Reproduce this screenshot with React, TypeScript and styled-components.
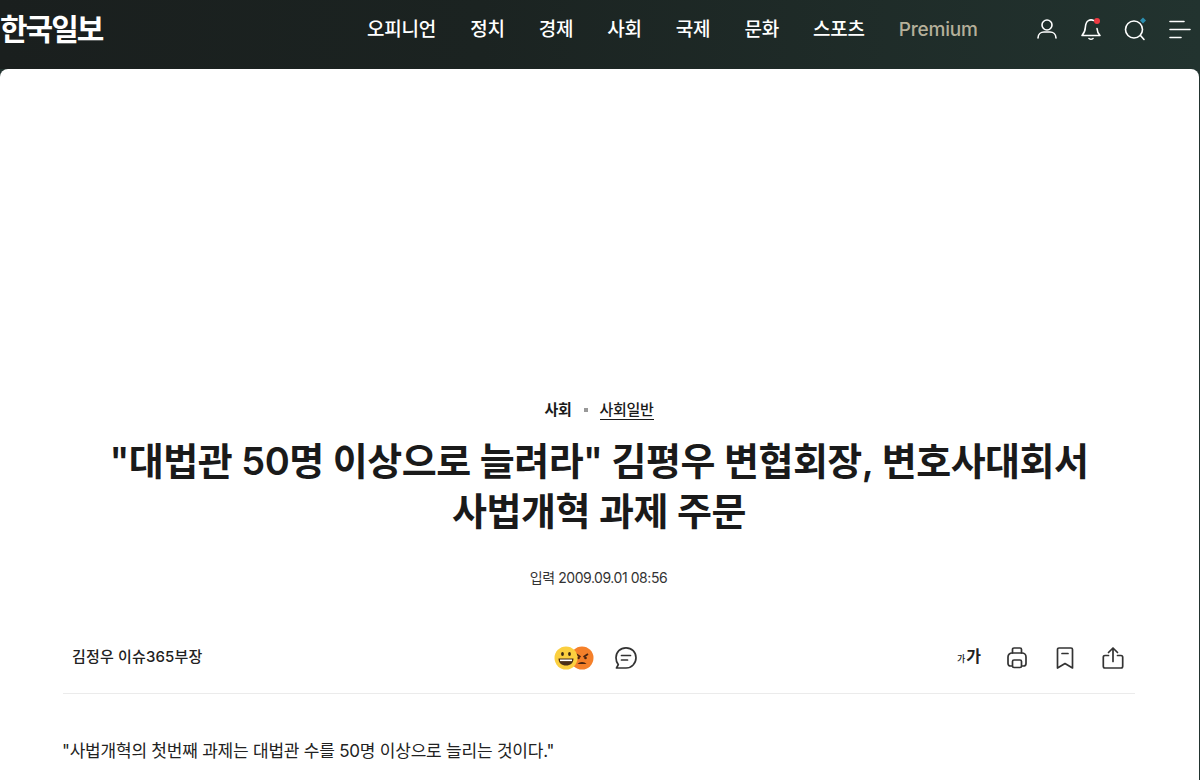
import React from 'react'
import styled, { createGlobalStyle } from 'styled-components'

const GlobalStyle = createGlobalStyle`
  html, body {
    margin: 0;
    height: 780px;
    overflow: hidden;
    background: #fff;
    font-family: Inter, 'Noto Sans CJK KR', sans-serif;
    color: #1a1a1a;
  }
`

const Header = styled.header`
  height: 69px;
  background: linear-gradient(90deg, #1a1f1e 0%, #1b2321 40%, #22332f 100%);
  display: flex;
  align-items: center;
  color: #fff;
`

const Logo = styled.div`
  font-size: 30px;
  font-weight: 700;
  letter-spacing: -2px;
  line-height: 36px;
  width: 367px;
  margin: -11px 0 0 0;
  flex: none;
`

const Nav = styled.nav`
  display: flex;
  gap: 34px;
  margin-top: -9px;
`

const NavItem = styled.a<{ $premium?: boolean }>`
  font-size: 19px;
  font-weight: 500;
  line-height: 24px;
  letter-spacing: -0.2px;
  color: ${(p) => (p.$premium ? '#b5b09a' : '#fff')};
`

const HeaderIcons = styled.div`
  margin-left: auto;
  margin-right: 9px;
  margin-top: -11px;
  display: flex;
  gap: 20px;
`

const IconBox = styled.span`
  width: 24px;
  height: 24px;
  display: block;
  svg {
    display: block;
  }
`

const Card = styled.main`
  height: 711px;
  margin-right: 1px;
  background: #fff;
  border-radius: 8px 8px 0 0;
  overflow: hidden;
`

const HeaderOverlap = styled.div`
  background: #22332f;
`

const Article = styled.article`
  padding: 329px 64px 0 63px;
`

const Crumbs = styled.div`
  display: flex;
  justify-content: center;
  align-items: center;
  gap: 12px;
  font-size: 15px;
  font-weight: 500;
  line-height: 24px;
  letter-spacing: -0.3px;
`

const TopCrumb = styled.span`
  font-weight: 600;
`

const Square = styled.i`
  width: 4px;
  height: 4px;
  background: #999;
`

const SubCrumb = styled.a`
  border-bottom: 1px solid #1a1a1a;
  line-height: 19px;
`

const Title = styled.h1`
  margin: 14px 0 0;
  font-size: 38px;
  font-weight: 600;
  line-height: 50px;
  letter-spacing: -0.5px;
  text-align: center;
  color: #1a1a1a;
`

const DateLine = styled.div`
  margin: 32px 1px 0 0;
  text-align: center;
  font-size: 14px;
  line-height: 20px;
  letter-spacing: -0.45px;
  color: #333;
`

const Toolbar = styled.div`
  margin-top: 34px;
  height: 71px;
  padding: 0 10px 0 9px;
  display: grid;
  grid-template-columns: 1fr auto 1fr;
  align-items: center;
  border-bottom: 1px solid #ebebeb;
`

const Byline = styled.div`
  font-size: 15px;
  font-weight: 500;
  line-height: 20px;
  margin-top: -2px;
  letter-spacing: 0.15px;
  color: #222;
`

const Reactions = styled.div`
  display: flex;
  align-items: center;
  gap: 20px;
  margin-right: 5px;
`

const Faces = styled.div`
  display: flex;
  svg:first-child {
    position: relative;
    z-index: 1;
  }
  svg + svg {
    margin-left: -8px;
  }
`

const Tools = styled.div`
  display: flex;
  justify-content: flex-end;
  gap: 24px;
`

const FontSizeIcon = styled.span`
  width: 24px;
  height: 24px;
  display: flex;
  align-items: baseline;
  justify-content: center;
  font-size: 16px;
  font-weight: 700;
  line-height: 20px;
  color: #222;
  small {
    font-size: 9px;
    font-weight: 500;
    margin-right: 1px;
  }
`

const Lead = styled.p`
  margin: 44px 0 0 -1px;
  font-size: 17px;
  line-height: 26px;
  letter-spacing: -0.22px;
  color: #222;
`

const stroke = { fill: 'none', stroke: '#fff', strokeWidth: 1.6, strokeLinecap: 'round' as const, strokeLinejoin: 'round' as const }
const dark = { fill: 'none', stroke: '#333', strokeWidth: 1.7, strokeLinecap: 'round' as const, strokeLinejoin: 'round' as const }

export default function App() {
  return (
    <>
      <GlobalStyle />
      <Header>
        <Logo>한국일보</Logo>
        <Nav>
          {['오피니언', '정치', '경제', '사회', '국제', '문화', '스포츠'].map((n) => (
            <NavItem key={n}>{n}</NavItem>
          ))}
          <NavItem $premium>Premium</NavItem>
        </Nav>
        <HeaderIcons>
          <IconBox>
            <svg width="24" height="24" viewBox="0 0 24 24">
              <circle cx="12" cy="8" r="5" {...stroke} />
              <path d="M3 21c0-4 3-6 6-6h6c3 0 6 2 6 6" {...stroke} />
            </svg>
          </IconBox>
          <IconBox>
            <svg width="24" height="24" viewBox="0 0 24 24">
              <path d="M15 3.6C13 2.6 11 2.6 9.4 3.6 7 5 6.6 7.4 6.4 10c-.2 3.6-1 6-3.4 8.5h18c-2-2-2.8-4-3-7" {...stroke} />
              <path d="M10 21.5c1 .8 3 .8 4 0" {...stroke} />
              <circle cx="18" cy="4" r="3" fill="#ee3a43" />
            </svg>
          </IconBox>
          <IconBox>
            <svg width="24" height="24" viewBox="0 0 24 24">
              <circle cx="11" cy="12.5" r="8.5" {...stroke} />
              <path d="M17.5 18.5l3.5 4" {...stroke} />
              <path d="M20 .5l3 3-3 3-3-3z" fill="#2c8fb0" />
            </svg>
          </IconBox>
          <IconBox>
            <svg width="24" height="24" viewBox="0 0 24 24">
              <path d="M3 4.5h14M3 12.5h20M3 20.5h11" {...stroke} />
            </svg>
          </IconBox>
        </HeaderIcons>
      </Header>
      <HeaderOverlap>
        <Card>
          <Article>
            <Crumbs>
              <TopCrumb>사회</TopCrumb>
              <Square />
              <SubCrumb>사회일반</SubCrumb>
            </Crumbs>
            <Title>
              "대법관 50명 이상으로 늘려라" 김평우 변협회장, 변호사대회서
              <br />
              사법개혁 과제 주문
            </Title>
            <DateLine>입력 2009.09.01 08:56</DateLine>
            <Toolbar>
              <Byline>김정우 이슈365부장</Byline>
              <Reactions>
                <Faces>
                  <svg width="24" height="24" viewBox="0 0 24 24">
                    <circle cx="12" cy="12" r="11.5" fill="#fbcf3f" />
                    <ellipse cx="8.5" cy="8" rx="1.4" ry="2" fill="#3c2a14" />
                    <ellipse cx="15.5" cy="8" rx="1.4" ry="2" fill="#3c2a14" />
                    <path d="M4.500 12.500h15c0 4.500-3.200 7-7.500 7s-7.500-2.500-7.500-7z" fill="#4a2f18" />
                    <path d="M6 13.500h12v1.600H6z" fill="#fff" />
                  </svg>
                  <svg width="24" height="24" viewBox="0 0 24 24">
                    <circle cx="12" cy="12" r="11.500" fill="#f5802a" />
                    <path d="M6 8l4.500 3M18 8l-4.500 3" stroke="#4a2410" strokeWidth="1.800" fill="none" />
                    <circle cx="8.500" cy="12" r="1.300" fill="#4a2410" />
                    <circle cx="15.500" cy="12" r="1.300" fill="#4a2410" />
                    <path d="M7.500 18c2-2.800 7-2.800 9 0z" fill="#4a2410" />
                  </svg>
                </Faces>
                <svg width="24" height="24" viewBox="0 0 24 24">
                  <path d="M12 1.800c5.800 0 10 4.400 10 10s-4.300 10.200-10 10.200H2.500l1.800-3.400C2.800 17 2 14.500 2 11.800 2 6.200 6.200 1.800 12 1.800z" {...dark} />
                  <path d="M7.500 9.500h9M7.500 14h6" {...dark} />
                </svg>
              </Reactions>
              <Tools>
                <FontSizeIcon>
                  <small>가</small>가
                </FontSizeIcon>
                <svg width="24" height="24" viewBox="0 0 24 24">
                  <path d="M7.500 7V3.500c0-.8.600-1.500 1.500-1.500h6c.9 0 1.500.7 1.500 1.500V7" {...dark} />
                  <path d="M7 20H5.500c-1.500 0-2.500-1-2.500-2.500V11c0-2.200 1.800-4 4-4h10c2.200 0 4 1.800 4 4v6.500c0 1.500-1 2.500-2.500 2.500H17" {...dark} />
                  <rect x="7.500" y="14" width="9" height="7.500" rx="1.500" {...dark} />
                </svg>
                <svg width="24" height="24" viewBox="0 0 24 24">
                  <path d="M4.500 3.500C4.500 2.700 5.200 2 6 2h12c.8 0 1.500.7 1.500 1.500V22L12 17.500 4.500 22z" {...dark} />
                  <path d="M9 7.500h6" {...dark} />
                </svg>
                <svg width="24" height="24" viewBox="0 0 24 24">
                  <path d="M7.500 9.500H4c-1 0-1.700.7-1.700 1.700v9.100c0 1 .7 1.700 1.700 1.700h16c1 0 1.700-.7 1.700-1.700v-9.100c0-1-.7-1.700-1.700-1.700h-3.500" {...dark} />
                  <path d="M12 15.500V2M7.500 6.500L12 2l4.500 4.500" {...dark} />
                </svg>
              </Tools>
            </Toolbar>
            <Lead>"사법개혁의 첫번째 과제는 대법관 수를 50명 이상으로 늘리는 것이다."</Lead>
          </Article>
        </Card>
      </HeaderOverlap>
    </>
  )
}
